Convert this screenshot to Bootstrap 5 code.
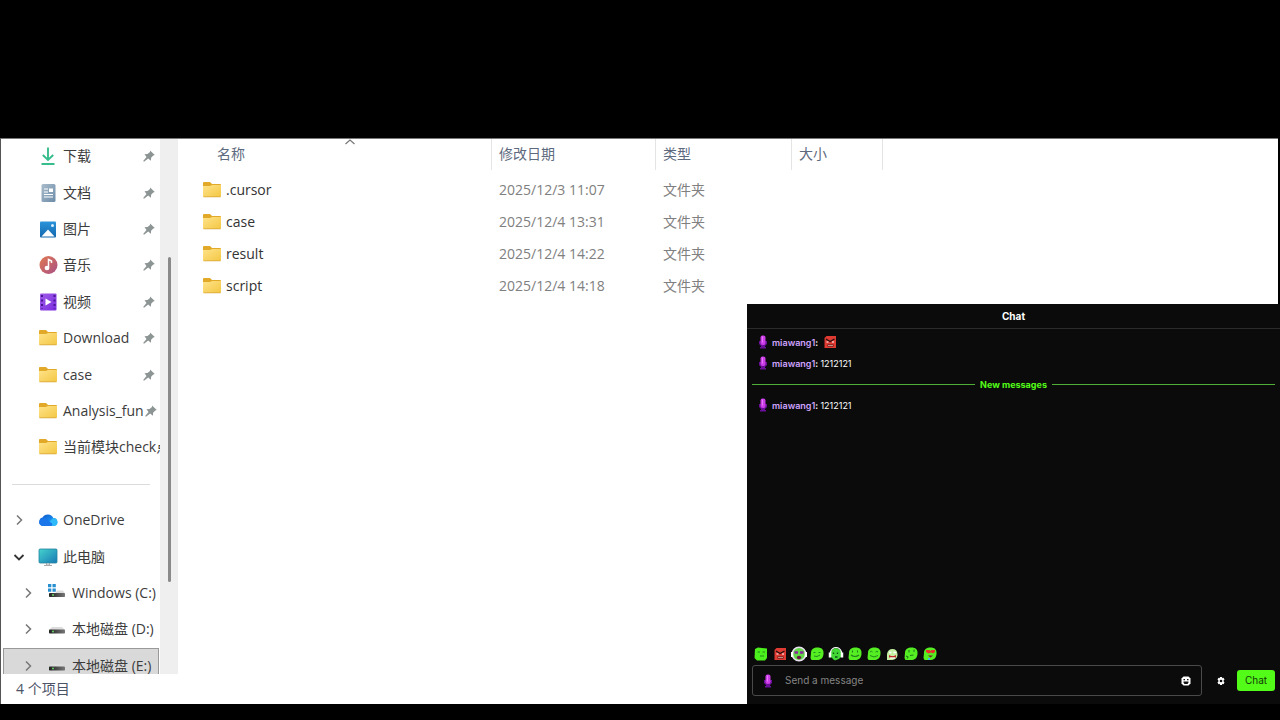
<!DOCTYPE html>
<html lang="zh-CN">
<head>
<meta charset="utf-8">
<meta name="viewport" content="width=device-width, initial-scale=1">
<title>文件资源管理器</title>
<link href="https://cdn.jsdelivr.net/npm/bootstrap@5.3.0/dist/css/bootstrap.min.css" rel="stylesheet">
<style>
  body { background: #000; padding: 138px 0 16px; font-family: "Open Sans", "Noto Sans CJK SC", sans-serif; font-size: 14px; line-height: 20px; }
  button { line-height: 1; }
  .stage { min-height: 0; }
  .explorer { background: #fff; border-top: 1px solid #777; border-left: 1px solid #555; margin-right: 2px; color: #444; }
  .explorer-body { flex-basis: 0; min-height: 0; }
  .side { width: 159px; }
  .tree { height: calc(100% + 11px); margin-top: -1px; }
  .tree li { flex: 1 1 0; min-height: 0; }
  .tree a { color: #3c3c3c; padding: 0 4px 0 9px; height: 100%; }
  .tree .deep { padding-left: 18px; }
  .tree .chosen { background: #d9d9d9; outline: 1px solid #999; outline-offset: -1px; margin-left: 2px; padding-left: 16px; margin-right: 1px; padding-right: 0; }
  .tree .rule { border-top: 1px solid #dcdcdc; margin: 1px 10px 0 11px; }
  .chev { width: 18px; height: 18px; margin-right: 10px; }
  .glyph { width: 20px; height: 20px; margin-right: 5px; }
  .pin { width: 14px; height: 14px; }
  .label-text { white-space: nowrap; }
  .track { width: 18px; background: #efefef; padding-top: 118px; }
  .thumb { width: 3px; height: 78%; background: #8a8a8a; border-radius: 2px; }
  .status { height: 30px; padding-left: 15px; color: #4d5366; }
  .files { width: 705px; table-layout: fixed; border-collapse: separate; border-spacing: 0; color: #333; }
  .files th { height: 31px; font-weight: 400; color: #5d6a7e; border-right: 1px solid #e4e4e4; padding: 0 7px 2px; }
  .files th:first-child { padding-left: 39px; }
  .files td { height: 32px; padding: 0 7px; color: #808080; }
  .files td:first-child { padding-left: 24px; color: #333; }
  .files tbody::before { content: ""; display: block; height: 4px; }
  .files .glyph { margin-right: 4px; }
  .sort { top: 0; left: 167px; width: 10px; height: 6px; }
  .chat { right: 0; bottom: 0; top: 166px; width: 533px; max-width: 60%; background: #0b0b0b; color: #fff; font-family: Inter, "Noto Sans CJK SC", sans-serif; font-size: 10px; line-height: 15px; }
  .chat h2 { font-size: 10px; line-height: 24px; border-bottom: 1px solid #2b2b2b; }
  .log { padding: 3px 5px; }
  .msg { height: 20px; margin-bottom: 1px; padding-left: 6px; font-size: 9px; }
  .msg .who { color: #cfa3ff; }
  .msg .who, .msg b { font-weight: 600; }
  .mic { width: 10px; height: 14px; margin-right: 4px; }
  .fresh { height: 21px; gap: 5px; color: #53fc18; font-size: 9px; font-weight: 700; }
  .fresh i { height: 1px; background: #4fae35; }
  .emotes { width: 187px; display: grid; grid-template-columns: repeat(10, 1fr); margin-left: 5px; }
  .bare { border: 0; padding: 0; background: none; color: #fff; display: flex; align-items: center; justify-content: center; }
  .emote { width: 16px; height: 16px; }
  .compose { padding: 3px 5px 8px; }
  .box { height: 31px; border: 1px solid #4a4a4a; border-radius: 3px; padding: 0 10px; }
  .box .mic { margin-right: 12px; }
  .box input { background: none; border: 0; outline: 0; padding: 0; color: #fff; min-width: 0; }
  .box input::placeholder { color: #858585; opacity: 1; }
  .tool { width: 10px; height: 10px; }
  .gear { margin: 0 11px 0 14px; }
  .send { background: #53fc18; color: #123a08; font-size: 10px; line-height: 15px; padding: 3px 0; width: 38px; border: 0; border-radius: 3px; }
</style>
</head>
<body class="min-vh-100 d-flex flex-column overflow-hidden">
<svg width="0" height="0" class="position-absolute" aria-hidden="true">
  <defs>
    <linearGradient id="gF" x2="1" y2="1"><stop stop-color="#ffe38a"/><stop offset="1" stop-color="#f3c743"/></linearGradient>
    <linearGradient id="gD" x2="1" y2="1"><stop stop-color="#a9bccb"/><stop offset="1" stop-color="#6d8ca8"/></linearGradient>
    <linearGradient id="gP" x2="0" y2="1"><stop stop-color="#2a94da"/><stop offset="1" stop-color="#1467ad"/></linearGradient>
    <linearGradient id="gM" x2="1" y2="1"><stop stop-color="#e27a51"/><stop offset="1" stop-color="#a84f86"/></linearGradient>
    <linearGradient id="gV" x2="1" y2="1"><stop stop-color="#a05be8"/><stop offset="1" stop-color="#7a2ee0"/></linearGradient>
    <linearGradient id="gC" x2="1" y2="1"><stop stop-color="#45d3cd"/><stop offset="1" stop-color="#1779b5"/></linearGradient>
    <linearGradient id="gO" x2="1" y2="1"><stop stop-color="#1254c4"/><stop offset=".5" stop-color="#1684ea"/><stop offset="1" stop-color="#2fc4f8"/></linearGradient>
    <linearGradient id="gS" x2="1" y2="0"><stop stop-color="#222"/><stop offset="1" stop-color="#777"/></linearGradient>
  </defs>
  <symbol id="folder" viewBox="0 0 20 20"><path d="M1 3a1 1 0 0 1 1-1h6l2 2h8a1 1 0 0 1 1 1v5H1z" fill="#e2a827"/><path d="M1 6h7l2-1h9v11a1 1 0 0 1-1 1H2a1 1 0 0 1-1-1z" fill="url(#gF)"/><path d="M1.500 16.800h17" stroke="#d8a73a" stroke-width=".8"/></symbol>
  <symbol id="down" viewBox="0 0 20 20"><path d="M10 1.500v12M4.800 9l5.200 5 5.200-5M3.500 18h13" fill="none" stroke="#35bd8b" stroke-width="1.900"/></symbol>
  <symbol id="doc" viewBox="0 0 20 20"><rect x="3.500" y="1" width="14" height="18" rx="1.500" fill="url(#gD)"/><path d="M6 6h4M6 9h4M6 11.500h9M6 14h9" stroke="#fff" stroke-width="1.200"/><rect x="11" y="5.500" width="4" height="3.500" fill="#fff"/></symbol>
  <symbol id="pic" viewBox="0 0 20 20"><rect x="2" y="2.500" width="16" height="16" rx="1" fill="url(#gP)"/><path d="M3.500 17.500l6.500-7 6.500 7z" fill="#fff"/><circle cx="14.500" cy="6.500" r="1.500" fill="#d8f0ff"/></symbol>
  <symbol id="music" viewBox="0 0 20 20"><circle cx="10.500" cy="10" r="9" fill="url(#gM)"/><path d="M10.500 12.500V4.500l3 1.500v2" stroke="#fff" stroke-width="1.500" fill="none"/><ellipse cx="9" cy="13" rx="2.400" ry="2.200" fill="#fff"/></symbol>
  <symbol id="video" viewBox="0 0 20 20"><rect x="2" y="1.500" width="16.500" height="17" rx="1" fill="url(#gV)"/><path d="M4 3v14M16.500 3v14" stroke="#4a1592" stroke-width="2" stroke-dasharray="2 2.500"/><path d="M7.500 6.500v7l6-3.500z" fill="#fff"/></symbol>
  <symbol id="cloud" viewBox="0 0 20 20"><path d="M5 16a4.300 4.300 0 0 1-.5-8.400A6 6 0 0 1 15.300 8 4 4 0 0 1 15.500 16z" fill="url(#gO)"/><path d="M7.500 16l7-7.500c3-.8 5 1.500 5 3.800S17.500 16 15.500 16z" fill="#2fb9f8"/><path d="M1 12c1-4 5-5 7.500-3l6 5-1 2H5c-2.500 0-4-1.800-4-4z" fill="#1b76ea"/></symbol>
  <symbol id="pc" viewBox="0 0 20 20"><rect x="1" y="2" width="18" height="14" rx="1" fill="url(#gC)" stroke="#2484a0" stroke-width=".8"/><path d="M8.500 16v2h3v-2M6 18.500h8" stroke="#aaa" stroke-width="1.100" fill="none"/></symbol>
  <symbol id="disk" viewBox="0 0 20 20"><path d="M5 8h10l3 3H2z" fill="#dcdcdc"/><rect x="2" y="10.500" width="16" height="4" rx=".8" fill="url(#gS)"/><circle cx="6" cy="12.500" r=".9" fill="#6be36b"/></symbol>
  <symbol id="windisk" viewBox="0 0 20 20"><path d="M1 1h3.300v3.300H1zM5.500 1h3.300v3.300H5.500zM1 5.500h3.300v3.300H1zM5.500 5.500h3.300v3.300H5.500z" fill="#288fd0"/><path d="M10 7.500h6l2 3H8z" fill="#dcdcdc"/><rect x="2" y="10" width="16" height="4" rx=".8" fill="url(#gS)"/><circle cx="6" cy="12" r=".9" fill="#6be36b"/></symbol>
  <symbol id="pinned" viewBox="0 0 14 14"><path d="M8 1.500L12.800 6l-1.500.4-2.200 2.300-.2 3L6.200 9.500 2 12.800l-.8-.8L4.500 8 2.500 5.300l3-.3L8 3z" fill="#8d9494"/></symbol>
  <symbol id="right" viewBox="0 0 18 18"><path d="M7 4.500l4.500 4.500L7 13.500" fill="none" stroke="#777" stroke-width="1.500"/></symbol>
  <symbol id="open" viewBox="0 0 18 18"><path d="M4.500 7L9 11.500 13.500 7" fill="none" stroke="#333" stroke-width="1.800"/></symbol>
  <symbol id="mic" viewBox="0 0 10 14"><path d="M1 6v3l2 2v1H2v1.500h6V12H7v-1l2-2V6" fill="#6b0f98"/><rect x="2.500" y="0.500" width="5" height="9.500" rx="2" fill="#cb3de6"/><path d="M4.500 1.500v6" stroke="#e878f8"/></symbol>
  <symbol id="blob" viewBox="0 0 16 16"><path d="M2 7c0-4 3-5.500 6.500-5.500 4 0 6.500 2 6 6.500-.4 4.500-3 6-6.500 6H2.500L1.500 12z" fill="#55ee22"/></symbol>
  <symbol id="e1" viewBox="0 0 16 16"><path d="M2 3l3-1.500 9 1V12l-2 2.500H4L1.500 12z" fill="#4cf01c"/><path d="M4.500 6h2.500M9.500 6H12M7 10h4" stroke="#1f8a1c" stroke-width="1"/></symbol>
  <symbol id="e2" viewBox="0 0 16 16"><path d="M2.500 4l2-2H14v12H2.500z" fill="#df3b32"/><path d="M4 5l4 2.500L12.500 5" stroke="#24100f" stroke-width="1.300" fill="none"/><path d="M4.500 8h2M10 8h2" stroke="#fff" stroke-width="1.200"/><path d="M5.500 11.500h6" stroke="#4a1512" stroke-width="2"/><path d="M6 11.500h5" stroke="#e0b0a8" stroke-width=".8"/></symbol>
  <symbol id="e3" viewBox="0 0 16 16"><circle cx="8" cy="8" r="6.800" fill="#62d848" stroke="#e9dff1" stroke-width="1.600"/><path d="M1 6v5M15 6v5" stroke="#fff" stroke-width="2.500"/><path d="M3.500 6.500h3.500M9 6.500h3.500" stroke="#8a279e" stroke-width="2.500"/><ellipse cx="8" cy="11.500" rx="2.200" ry="1.800" fill="#6c1746"/></symbol>
  <symbol id="e4" viewBox="0 0 16 16"><use href="#blob"/><path d="M4.500 6.500h2M9.500 6.500h2M5 10q3 1.500 6-1" stroke="#1f8a1c" stroke-width="1" fill="none"/></symbol>
  <symbol id="e5" viewBox="0 0 16 16"><path d="M3 5q5-6 10 0v6q-3 4-7 3l-3-3z" fill="#43d735"/><path d="M2.500 8V6q1.500-4.500 5.500-4.500t5.500 4.500v2" fill="none" stroke="#fff" stroke-width="1.200"/><path d="M2 6.500v5M14 6.500v5" stroke="#fff" stroke-width="2.500"/><path d="M5.500 6.500v1.500M9.500 6.500v1.500M7 11h2.500" stroke="#0a5512" stroke-width="1.300"/></symbol>
  <symbol id="e6" viewBox="0 0 16 16"><use href="#blob"/><path d="M5.500 4.500v2M10.500 4.500v2M4 9q4 3 8 0" stroke="#1f7d1c" stroke-width="1.100" fill="none"/></symbol>
  <symbol id="e7" viewBox="0 0 16 16"><use href="#blob"/><path d="M4 6q1.500-1.500 2.500 0M9.500 6q1.500-1.500 2.500 0M4 9.500q4 3 8 0" stroke="#1f8a1c" stroke-width="1" fill="none"/></symbol>
  <symbol id="e8" viewBox="0 0 16 16"><path d="M3 8q1-5 5.500-5t5 5-5 6H3z" fill="#c5f0a4"/><path d="M5 6.500h2.500M9.500 6.500H12" stroke="#fff" stroke-width="1.600"/><path d="M5 11.500V9l2 1h3l2-1v2.500z" fill="#bf2a28"/><path d="M6 12h5" stroke="#fff"/></symbol>
  <symbol id="e9" viewBox="0 0 16 16"><use href="#blob"/><path d="M6 4v2.500M11 3.500v2.500M7 9.500l3.500-.5M3 10l2 1-1 1.500" stroke="#1f7d1c" stroke-width="1.100" fill="none"/></symbol>
  <symbol id="e10" viewBox="0 0 16 16"><use href="#blob"/><path d="M4 4h3.500l1 1 1-1H13v2l-2 1.500L9 6.500 6.500 7.500 4 6z" fill="#e7332c"/><path d="M6 9.500h5l-2.500 2z" fill="#7a1f25"/><path d="M7 12v2" stroke="#3bb7e6" stroke-width="2"/></symbol>
</svg>

<main class="stage position-relative flex-grow-1 d-flex flex-column">
  <section class="explorer flex-grow-1 d-flex flex-column">
    <div class="explorer-body d-flex flex-grow-1">
      <nav class="side overflow-hidden flex-shrink-0" aria-label="导航窗格">
        <ul class="tree list-unstyled d-flex flex-column mb-0">
          <li><a href="#" class="d-flex align-items-center text-decoration-none"><span class="chev flex-shrink-0"></span><svg class="glyph flex-shrink-0"><use href="#down"/></svg><span class="label-text">下载</span><svg class="pin flex-shrink-0 ms-auto"><use href="#pinned"/></svg></a></li>
          <li><a href="#" class="d-flex align-items-center text-decoration-none"><span class="chev flex-shrink-0"></span><svg class="glyph flex-shrink-0"><use href="#doc"/></svg><span class="label-text">文档</span><svg class="pin flex-shrink-0 ms-auto"><use href="#pinned"/></svg></a></li>
          <li><a href="#" class="d-flex align-items-center text-decoration-none"><span class="chev flex-shrink-0"></span><svg class="glyph flex-shrink-0"><use href="#pic"/></svg><span class="label-text">图片</span><svg class="pin flex-shrink-0 ms-auto"><use href="#pinned"/></svg></a></li>
          <li><a href="#" class="d-flex align-items-center text-decoration-none"><span class="chev flex-shrink-0"></span><svg class="glyph flex-shrink-0"><use href="#music"/></svg><span class="label-text">音乐</span><svg class="pin flex-shrink-0 ms-auto"><use href="#pinned"/></svg></a></li>
          <li><a href="#" class="d-flex align-items-center text-decoration-none"><span class="chev flex-shrink-0"></span><svg class="glyph flex-shrink-0"><use href="#video"/></svg><span class="label-text">视频</span><svg class="pin flex-shrink-0 ms-auto"><use href="#pinned"/></svg></a></li>
          <li><a href="#" class="d-flex align-items-center text-decoration-none"><span class="chev flex-shrink-0"></span><svg class="glyph flex-shrink-0"><use href="#folder"/></svg><span class="label-text">Download</span><svg class="pin flex-shrink-0 ms-auto"><use href="#pinned"/></svg></a></li>
          <li><a href="#" class="d-flex align-items-center text-decoration-none"><span class="chev flex-shrink-0"></span><svg class="glyph flex-shrink-0"><use href="#folder"/></svg><span class="label-text">case</span><svg class="pin flex-shrink-0 ms-auto"><use href="#pinned"/></svg></a></li>
          <li><a href="#" class="d-flex align-items-center text-decoration-none"><span class="chev flex-shrink-0"></span><svg class="glyph flex-shrink-0"><use href="#folder"/></svg><span class="label-text">Analysis_fun</span><svg class="pin flex-shrink-0 ms-auto"><use href="#pinned"/></svg></a></li>
          <li><a href="#" class="d-flex align-items-center text-decoration-none pe-0"><span class="chev flex-shrink-0"></span><svg class="glyph flex-shrink-0"><use href="#folder"/></svg><span class="label-text">当前模块check点</span></a></li>
          <li class="d-flex flex-column justify-content-center"><div class="rule"></div></li>
          <li><a href="#" class="d-flex align-items-center text-decoration-none"><svg class="chev flex-shrink-0"><use href="#right"/></svg><svg class="glyph flex-shrink-0"><use href="#cloud"/></svg><span class="label-text">OneDrive</span></a></li>
          <li><a href="#" class="d-flex align-items-center text-decoration-none"><svg class="chev flex-shrink-0"><use href="#open"/></svg><svg class="glyph flex-shrink-0"><use href="#pc"/></svg><span class="label-text">此电脑</span></a></li>
          <li><a href="#" class="deep d-flex align-items-center text-decoration-none pe-0"><svg class="chev flex-shrink-0"><use href="#right"/></svg><svg class="glyph flex-shrink-0"><use href="#windisk"/></svg><span class="label-text">Windows (C:)</span></a></li>
          <li><a href="#" class="deep d-flex align-items-center text-decoration-none"><svg class="chev flex-shrink-0"><use href="#right"/></svg><svg class="glyph flex-shrink-0"><use href="#disk"/></svg><span class="label-text">本地磁盘 (D:)</span></a></li>
          <li><a href="#" class="chosen d-flex align-items-center text-decoration-none" aria-current="true"><svg class="chev flex-shrink-0"><use href="#right"/></svg><svg class="glyph flex-shrink-0"><use href="#disk"/></svg><span class="label-text">本地磁盘 (E:)</span></a></li>
        </ul>
      </nav>
      <div class="track flex-shrink-0 ps-2"><div class="thumb"></div></div>
      <div class="flex-grow-1 position-relative">
        <svg class="sort position-absolute" viewBox="0 0 10 6"><path d="M.5 5L5 1l4.500 4" fill="none" stroke="#777" stroke-width="1.200"/></svg>
        <table class="files">
          <colgroup><col style="width:314px"><col style="width:164px"><col style="width:136px"><col style="width:91px"></colgroup>
          <thead><tr><th scope="col">名称</th><th scope="col">修改日期</th><th scope="col">类型</th><th scope="col">大小</th></tr></thead>
          <tbody>
            <tr><td><span class="d-flex align-items-center"><svg class="glyph"><use href="#folder"/></svg>.cursor</span></td><td>2025/12/3 11:07</td><td>文件夹</td><td></td></tr>
            <tr><td><span class="d-flex align-items-center"><svg class="glyph"><use href="#folder"/></svg>case</span></td><td>2025/12/4 13:31</td><td>文件夹</td><td></td></tr>
            <tr><td><span class="d-flex align-items-center"><svg class="glyph"><use href="#folder"/></svg>result</span></td><td>2025/12/4 14:22</td><td>文件夹</td><td></td></tr>
            <tr><td><span class="d-flex align-items-center"><svg class="glyph"><use href="#folder"/></svg>script</span></td><td>2025/12/4 14:18</td><td>文件夹</td><td></td></tr>
          </tbody>
        </table>
      </div>
    </div>
    <footer class="status d-flex align-items-center">4 个项目</footer>
  </section>

  <aside class="chat position-absolute d-flex flex-column">
    <h2 class="fw-bold text-center mb-0">Chat</h2>
    <div class="log flex-grow-1">
      <div class="msg d-flex align-items-center"><svg class="mic"><use href="#mic"/></svg><span class="who">miawang1</span><b>:</b><svg class="emote ms-1"><use href="#e2"/></svg></div>
      <div class="msg d-flex align-items-center"><svg class="mic"><use href="#mic"/></svg><span class="who">miawang1</span><b>:&nbsp;</b><span>1212121</span></div>
      <div class="fresh d-flex align-items-center"><i class="flex-grow-1"></i><span>New messages</span><i class="flex-grow-1"></i></div>
      <div class="msg d-flex align-items-center"><svg class="mic"><use href="#mic"/></svg><span class="who">miawang1</span><b>:&nbsp;</b><span>1212121</span></div>
    </div>
    <div class="emotes">
      <button type="button" class="bare" aria-label="calm"><svg class="emote"><use href="#e1"/></svg></button>
      <button type="button" class="bare" aria-label="angry"><svg class="emote"><use href="#e2"/></svg></button>
      <button type="button" class="bare" aria-label="party"><svg class="emote"><use href="#e3"/></svg></button>
      <button type="button" class="bare" aria-label="smirk"><svg class="emote"><use href="#e4"/></svg></button>
      <button type="button" class="bare" aria-label="headphones"><svg class="emote"><use href="#e5"/></svg></button>
      <button type="button" class="bare" aria-label="smile"><svg class="emote"><use href="#e6"/></svg></button>
      <button type="button" class="bare" aria-label="happy"><svg class="emote"><use href="#e7"/></svg></button>
      <button type="button" class="bare" aria-label="laugh"><svg class="emote"><use href="#e8"/></svg></button>
      <button type="button" class="bare" aria-label="think"><svg class="emote"><use href="#e9"/></svg></button>
      <button type="button" class="bare" aria-label="love"><svg class="emote"><use href="#e10"/></svg></button>
    </div>
    <form class="compose d-flex align-items-center">
      <div class="box d-flex align-items-center flex-grow-1">
        <svg class="mic"><use href="#mic"/></svg>
        <input type="text" class="flex-grow-1" placeholder="Send a message" aria-label="Send a message">
        <button type="button" class="bare" aria-label="Emoji"><svg class="tool" viewBox="0 0 10 10"><path d="M2.500 .5h5l2 2v5l-2 2h-5l-2-2v-5z" fill="#fff"/><path d="M2.500 3h1.500v1.300H2.500zM6 3h1.500v1.300H6zM2.500 5.500h5v1L6.500 8h-3l-1-1.500z" fill="#111"/></svg></button>
      </div>
      <button type="button" class="bare gear" aria-label="Settings"><svg class="tool" viewBox="0 0 10 10"><path d="M4 1h2l.3 1.200 1.200-.4 1 1.700-.9.900v1.200l.9.900-1 1.700-1.200-.4L6 9H4l-.3-1.200-1.200.4-1-1.700.9-.9V4.400l-.9-.9 1-1.700 1.200.4z" fill="#fff"/><circle cx="5" cy="5" r="1.300" fill="#0b0b0b"/></svg></button>
      <button type="submit" class="send">Chat</button>
    </form>
  </aside>
</main>
<script src="https://cdn.jsdelivr.net/npm/bootstrap@5.3.0/dist/js/bootstrap.bundle.min.js"></script>
</body>
</html>
